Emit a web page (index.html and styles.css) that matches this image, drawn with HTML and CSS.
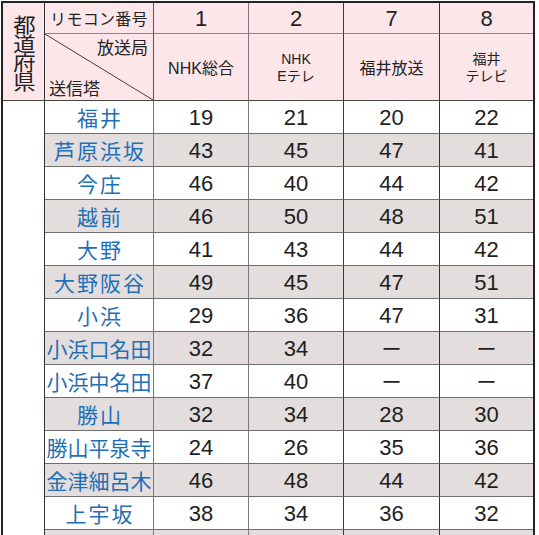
FILE: index.html
```html
<!DOCTYPE html>
<html lang="ja">
<head>
<meta charset="utf-8">
<title>リモコン番号表</title>
<link rel="stylesheet" href="styles.css">
</head>
<body>
<div class="table">
  <div class="c pref-head"><span class="vert">都道府県</span></div>
  <div class="c h1 remo">リモコン番号</div>
  <div class="c h1 num-h c2">1</div>
  <div class="c h1 num-h c3">2</div>
  <div class="c h1 num-h c4">7</div>
  <div class="c h1 num-h c5">8</div>
  <div class="c h2 diag"><span class="kyoku">放送局</span><span class="tou">送信塔</span></div>
  <div class="c h2 st c2">NHK総合</div>
  <div class="c h2 st sm c3">NHK<br>Eテレ</div>
  <div class="c h2 st c4">福井放送</div>
  <div class="c h2 st sm c5">福井<br>テレビ</div>
  <div class="c pref-body"></div>

  <div class="row"><div class="c name">福井</div><div class="c n c2">19</div><div class="c n c3">21</div><div class="c n c4">20</div><div class="c n c5">22</div></div>
  <div class="row g"><div class="c name">芦原浜坂</div><div class="c n c2">43</div><div class="c n c3">45</div><div class="c n c4">47</div><div class="c n c5">41</div></div>
  <div class="row"><div class="c name">今庄</div><div class="c n c2">46</div><div class="c n c3">40</div><div class="c n c4">44</div><div class="c n c5">42</div></div>
  <div class="row g"><div class="c name">越前</div><div class="c n c2">46</div><div class="c n c3">50</div><div class="c n c4">48</div><div class="c n c5">51</div></div>
  <div class="row"><div class="c name">大野</div><div class="c n c2">41</div><div class="c n c3">43</div><div class="c n c4">44</div><div class="c n c5">42</div></div>
  <div class="row g"><div class="c name">大野阪谷</div><div class="c n c2">49</div><div class="c n c3">45</div><div class="c n c4">47</div><div class="c n c5">51</div></div>
  <div class="row"><div class="c name">小浜</div><div class="c n c2">29</div><div class="c n c3">36</div><div class="c n c4">47</div><div class="c n c5">31</div></div>
  <div class="row g"><div class="c name long">小浜口名田</div><div class="c n c2">32</div><div class="c n c3">34</div><div class="c n dash c4">ー</div><div class="c n dash c5">ー</div></div>
  <div class="row"><div class="c name long">小浜中名田</div><div class="c n c2">37</div><div class="c n c3">40</div><div class="c n dash c4">ー</div><div class="c n dash c5">ー</div></div>
  <div class="row g"><div class="c name">勝山</div><div class="c n c2">32</div><div class="c n c3">34</div><div class="c n c4">28</div><div class="c n c5">30</div></div>
  <div class="row"><div class="c name long">勝山平泉寺</div><div class="c n c2">24</div><div class="c n c3">26</div><div class="c n c4">35</div><div class="c n c5">36</div></div>
  <div class="row g"><div class="c name long">金津細呂木</div><div class="c n c2">46</div><div class="c n c3">48</div><div class="c n c4">44</div><div class="c n c5">42</div></div>
  <div class="row"><div class="c name">上宇坂</div><div class="c n c2">38</div><div class="c n c3">34</div><div class="c n c4">36</div><div class="c n c5">32</div></div>
  <div class="row g"><div class="c name"></div><div class="c n c2"></div><div class="c n c3"></div><div class="c n c4"></div><div class="c n c5"></div></div>
</div>
</body>
</html>
```
FILE: styles.css
```css
html, body {
  margin: 0;
  padding: 0;
  background: #ffffff;
}
body {
  font-family: "Liberation Sans", "Noto Sans CJK JP", sans-serif;
  color: #222;
}
.table {
  display: grid;
  grid-template-columns: 42px 109px 95px 95px 96px 93px;
  grid-template-rows: 31px 67px repeat(14, 33px);
  width: max-content;
  margin: 1px 0 0 1px;
  border-top: 2px solid #222;
  border-left: 2px solid #222;
  border-right: 2px solid #222;
}
.row {
  display: contents;
}
.c {
  box-sizing: border-box;
  border-right: 1px solid #777;
  border-bottom: 1px solid #6e6e6e;
  display: flex;
  align-items: center;
  justify-content: center;
  background: #fff;
}
.c2 { border-right-color: #7a7a7a; }
.c3 { border-right-color: #3a3a3a; }
.c4 { border-right-color: #333; }
.c5 { border-right: 0; }
.pref-head {
  grid-column: 1;
  grid-row: 1 / span 2;
  background: #fde6ea;
  border-right-color: #333;
  border-bottom-color: #444;
}
.vert {
  display: block;
  writing-mode: vertical-rl;
  text-orientation: upright;
  font-family: "Noto Sans CJK JP", sans-serif;
  font-size: 20px;
  line-height: 22px;
  letter-spacing: -1px;
  color: #222;
  transform: scaleX(1.12);
  margin-top: 2px;
}
.pref-body {
  grid-column: 1;
  grid-row: 3 / span 14;
  border-right-color: #333;
  border-bottom: 0;
}
.h1 {
  background: #fde6ea;
  border-bottom-color: #8a8a8a;
}
.h2 {
  background: #fde6ea;
  border-bottom-color: #444;
}
.remo {
  font-family: "Noto Sans CJK JP", sans-serif;
  font-size: 16px;
  letter-spacing: 0.3px;
  border-right-color: #555;
}
.num-h {
  font-size: 22px;
  padding-top: 1px;
}
.diag {
  border-right-color: #555;
  flex-direction: column;
  align-items: stretch;
  justify-content: space-between;
  padding: 1px 5px 0 4px;
  background:
    linear-gradient(to top right, transparent calc(50% - 0.8px), #333 50%, transparent calc(50% + 0.8px)),
    #fde6ea;
  font-family: "Noto Sans CJK JP", sans-serif;
  font-size: 17px;
  line-height: 24px;
}
.kyoku {
  text-align: right;
}
.tou {
  text-align: left;
}
.st {
  font-size: 16px;
  line-height: 17px;
  text-align: center;
  padding-top: 2px;
}
.st.sm {
  font-size: 14px;
  line-height: 17px;
}
.name {
  color: #1f6fb6;
  font-family: "Noto Sans CJK JP", sans-serif;
  font-size: 21px;
  letter-spacing: 2px;
  padding-left: 2px;
  border-right-color: #777;
  white-space: nowrap;
}
.name.long {
  letter-spacing: 0;
  padding-left: 0;
}
.n {
  font-size: 22px;
  color: #1e1e1e;
  padding-top: 1px;
}
.n.dash {
  font-family: "Noto Sans CJK JP", sans-serif;
  font-size: 20px;
  padding-top: 0;
}
.row.g .c {
  background: #e3dedd;
}
```
